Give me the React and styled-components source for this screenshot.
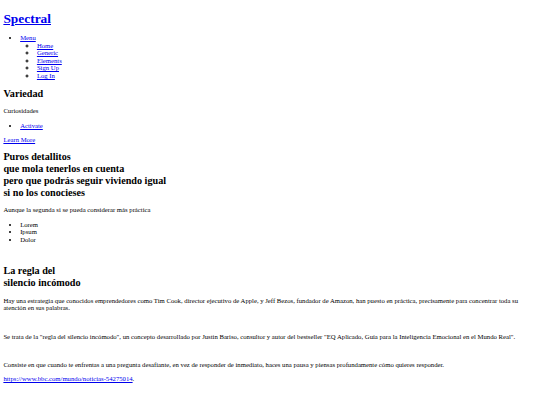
import React from 'react'
import styled, { createGlobalStyle } from 'styled-components'

const GlobalStyle = createGlobalStyle`
    html, body {
        background: #ffffff;
    }
    body {
        margin: 3.4px;
        font-family: "Liberation Serif", "Times New Roman", serif;
        font-size: 6.7px;
        line-height: 1.12;
        color: #000000;
    }
`

const Link = styled.a`
    color: #0000ee;
    text-decoration: underline;
`

const Logo = styled.h1`
    font-size: 2em;
    font-weight: 700;
    margin: 0.6em 0;
`

const Heading = styled.h2`
    font-size: 1.52em;
    font-weight: 700;
    line-height: 1.15;
    margin: 0.8em 0;
`

const Para = styled.p`
    margin: 1em 0;
`

const List = styled.ul`
    margin: ${p => (p.$nested ? '0' : '1em 0')};
    padding-left: 2.5em;
    list-style-type: ${p => (p.$nested ? 'circle' : 'disc')};
`

const Item = styled.li``

const Gap = styled.p`
    margin: 1em 0;
`

function App() {
    return (
        <>
            <GlobalStyle />
            <header>
                <Logo><Link href="#">Spectral</Link></Logo>
                <nav>
                    <List>
                        <Item>
                            <Link href="#">Menu</Link>
                            <List $nested>
                                <Item><Link href="#">Home</Link></Item>
                                <Item><Link href="#">Generic</Link></Item>
                                <Item><Link href="#">Elements</Link></Item>
                                <Item><Link href="#">Sign Up</Link></Item>
                                <Item><Link href="#">Log In</Link></Item>
                            </List>
                        </Item>
                    </List>
                </nav>
            </header>
            <section>
                <Heading>Variedad</Heading>
                <Para>Curiosidades</Para>
                <List>
                    <Item><Link href="#">Activate</Link></Item>
                </List>
                <Link href="#">Learn More</Link>
            </section>
            <section>
                <Heading>
                    Puros detallitos<br />
                    que mola tenerlos en cuenta<br />
                    pero que podrás seguir viviendo igual<br />
                    si no los conocieses
                </Heading>
                <Para>Aunque la segunda si se pueda considerar más práctica</Para>
                <List>
                    <Item>Lorem</Item>
                    <Item>Ipsum</Item>
                    <Item>Dolor</Item>
                </List>
            </section>
            <Gap><br /></Gap>
            <article>
                <Heading>La regla del<br />silencio incómodo</Heading>
                <Para>
                    Hay una estrategia que conocidos emprendedores como Tim Cook, director ejecutivo de Apple, y Jeff Bezos, fundador de Amazon, han puesto en práctica, precisamente para concentrar toda su atención en sus palabras.
                </Para>
                <Gap><br /></Gap>
                <Para>
                    Se trata de la "regla del silencio incómodo", un concepto desarrollado por Justin Bariso, consultor y autor del bestseller "EQ Aplicado, Guía para la Inteligencia Emocional en el Mundo Real".
                </Para>
                <Gap><br /></Gap>
                <Para>
                    Consiste en que cuando te enfrentas a una pregunta desafiante, en vez de responder de inmediato, haces una pausa y piensas profundamente cómo quieres responder.
                </Para>
                <Para>
                    <Link href="#">https://www.bbc.com/mundo/noticias-54275014</Link>.
                </Para>
            </article>
        </>
    )
}

export default App
